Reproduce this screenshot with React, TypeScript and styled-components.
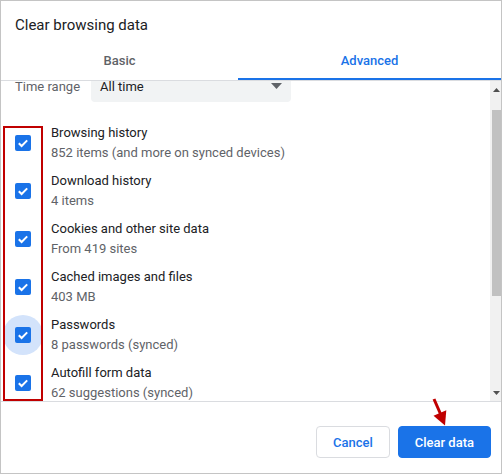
import { useLayoutEffect, useRef } from "react";
import styled, { createGlobalStyle } from "styled-components";

const GlobalStyle = createGlobalStyle`
  html, body {
    margin: 0;
    padding: 0;
    background: #fff;
  }
  body {
    font-family: Roboto, "Liberation Sans", Arial, sans-serif;
  }
  * {
    box-sizing: border-box;
  }
`;

const Dialog = styled.div`
  position: relative;
  width: 502px;
  height: 474px;
  border: 1px solid #c4c4c4;
  display: flex;
  flex-direction: column;
  background: #fff;
`;

const Header = styled.div`
  height: 39px;
  padding: 14px 0 0 14px;
  font-size: 15px;
  line-height: 20px;
  color: #202124;
`;

const TabBar = styled.div`
  display: flex;
  height: 41px;
  border-bottom: 1px solid #dadce0;
`;

const Tab = styled.div<{ $active?: boolean }>`
  flex: ${(p) => (p.$active ? "1 1 auto" : "0 0 237px")};
  display: flex;
  align-items: center;
  justify-content: center;
  padding-top: 3px;
  font-size: 13px;
  font-weight: 500;
  color: ${(p) => (p.$active ? "#1a73e8" : "#5f6368")};
  border-bottom: 2px solid ${(p) => (p.$active ? "#1a73e8" : "transparent")};
`;

const ScrollArea = styled.div`
  display: flex;
  height: 320px;
`;

const Content = styled.div`
  flex: 1;
  overflow: hidden;
  padding-left: 14px;
`;

const TimeRow = styled.div`
  display: flex;
  align-items: center;
  height: 32px;
`;

const TimeLabel = styled.span`
  width: 76px;
  font-size: 13px;
  color: #5f6368;
`;

const Select = styled.div`
  width: 200px;
  height: 32px;
  padding: 0 9px;
  display: flex;
  align-items: center;
  justify-content: space-between;
  background: #f1f3f4;
  border-radius: 4px;
  font-size: 13px;
  color: #202124;
`;

const List = styled.div`
  margin-top: 17px;
  display: flex;
  flex-direction: column;
`;

const Row = styled.div`
  display: flex;
  align-items: center;
  height: 48px;
`;

const CheckWrap = styled.div<{ $focused?: boolean }>`
  position: relative;
  width: 16px;
  height: 16px;
  margin-right: 20px;
  flex: none;

  &::before {
    content: "";
    display: ${(p) => (p.$focused ? "block" : "none")};
    position: absolute;
    left: -12px;
    top: -12px;
    width: 40px;
    height: 40px;
    border-radius: 50%;
    background: #d3e3fb;
  }

  svg {
    position: relative;
    display: block;
  }
`;

const RowText = styled.div`
  display: flex;
  flex-direction: column;
  font-size: 13px;
  line-height: 20px;
`;

const RowTitle = styled.span`
  color: #202124;
`;

const RowSub = styled.span`
  color: #5f6368;
`;

const Scrollbar = styled.div`
  width: 11px;
  display: flex;
  flex-direction: column;
  background: #f1f1f1;
`;

const ScrollButton = styled.div`
  height: 17px;
  display: flex;
  align-items: center;
  justify-content: center;
  padding-left: 2px;
`;

const Track = styled.div`
  flex: 1;
  padding: 12px 0 0 2px;
`;

const Thumb = styled.div`
  width: 9px;
  height: 186px;
  background: #c1c1c1;
`;

const Footer = styled.div`
  display: flex;
  justify-content: flex-end;
  gap: 8px;
  padding: 24px 10px 15px 0;
  border-top: 1px solid #dadce0;
`;

const Button = styled.button<{ $primary?: boolean }>`
  height: 32px;
  padding: 0 16px;
  border-radius: 4px;
  border: 1px solid ${(p) => (p.$primary ? "#1a73e8" : "#dadce0")};
  background: ${(p) => (p.$primary ? "#1a73e8" : "#fff")};
  color: ${(p) => (p.$primary ? "#fff" : "#1a73e8")};
  font-family: inherit;
  font-size: 13px;
  font-weight: 500;
  cursor: pointer;
`;

// red annotation drawn over the screenshot
const Highlight = styled.div`
  position: absolute;
  left: 2px;
  top: 125px;
  width: 40px;
  height: 275px;
  border: 2px solid #c00000;
  pointer-events: none;
`;

const Pointer = styled.svg`
  position: absolute;
  left: 427px;
  top: 395px;
  pointer-events: none;
`;

const items = [
  { title: "Browsing history", sub: "852 items (and more on synced devices)" },
  { title: "Download history", sub: "4 items" },
  { title: "Cookies and other site data", sub: "From 419 sites" },
  { title: "Cached images and files", sub: "403 MB" },
  { title: "Passwords", sub: "8 passwords (synced)", focused: true },
  { title: "Autofill form data", sub: "62 suggestions (synced)" },
  { title: "Site settings", sub: "1 site" },
  { title: "Hosted app data", sub: "2 apps (Cast, Chrome Web Store)" },
];

function CheckBox() {
  return (
    <svg width="16" height="16" viewBox="0 0 16 16">
      <rect width="16" height="16" rx="2" fill="#1a73e8" />
      <path
        d="M3.8 8.2 6.6 11 12.2 5.4"
        fill="none"
        stroke="#fff"
        strokeWidth="2"
      />
    </svg>
  );
}

export default function App() {
  const contentRef = useRef<HTMLDivElement>(null);

  useLayoutEffect(() => {
    if (contentRef.current) contentRef.current.scrollTop = 11;
  }, []);

  return (
    <>
      <GlobalStyle />
      <Dialog>
        <Header>Clear browsing data</Header>
        <TabBar>
          <Tab>Basic</Tab>
          <Tab $active>Advanced</Tab>
        </TabBar>
        <ScrollArea>
          <Content ref={contentRef}>
            <TimeRow>
              <TimeLabel>Time range</TimeLabel>
              <Select>
                <span>All time</span>
                <svg width="11" height="6" viewBox="0 0 11 6">
                  <path d="M0 0h11L5.5 6z" fill="#5f6368" />
                </svg>
              </Select>
            </TimeRow>
            <List>
              {items.map((it) => (
                <Row key={it.title}>
                  <CheckWrap $focused={it.focused}>
                    <CheckBox />
                  </CheckWrap>
                  <RowText>
                    <RowTitle>{it.title}</RowTitle>
                    <RowSub>{it.sub}</RowSub>
                  </RowText>
                </Row>
              ))}
            </List>
          </Content>
          <Scrollbar>
            <ScrollButton>
              <svg width="7" height="4" viewBox="0 0 7 4">
                <path d="M0 4h7L3.5 0z" fill="#505050" />
              </svg>
            </ScrollButton>
            <Track>
              <Thumb />
            </Track>
            <ScrollButton>
              <svg width="7" height="4" viewBox="0 0 7 4">
                <path d="M0 0h7L3.5 4z" fill="#505050" />
              </svg>
            </ScrollButton>
          </Scrollbar>
        </ScrollArea>
        <Footer>
          <Button>Cancel</Button>
          <Button $primary>Clear data</Button>
        </Footer>
        <Highlight />
        <Pointer width="24" height="32" viewBox="0 0 24 32">
          <path d="M6 3 12.5 18" stroke="#c00000" strokeWidth="3" />
          <path d="M5.5 19.7 18.3 14.3 17 29.5z" fill="#c00000" />
        </Pointer>
      </Dialog>
    </>
  );
}
